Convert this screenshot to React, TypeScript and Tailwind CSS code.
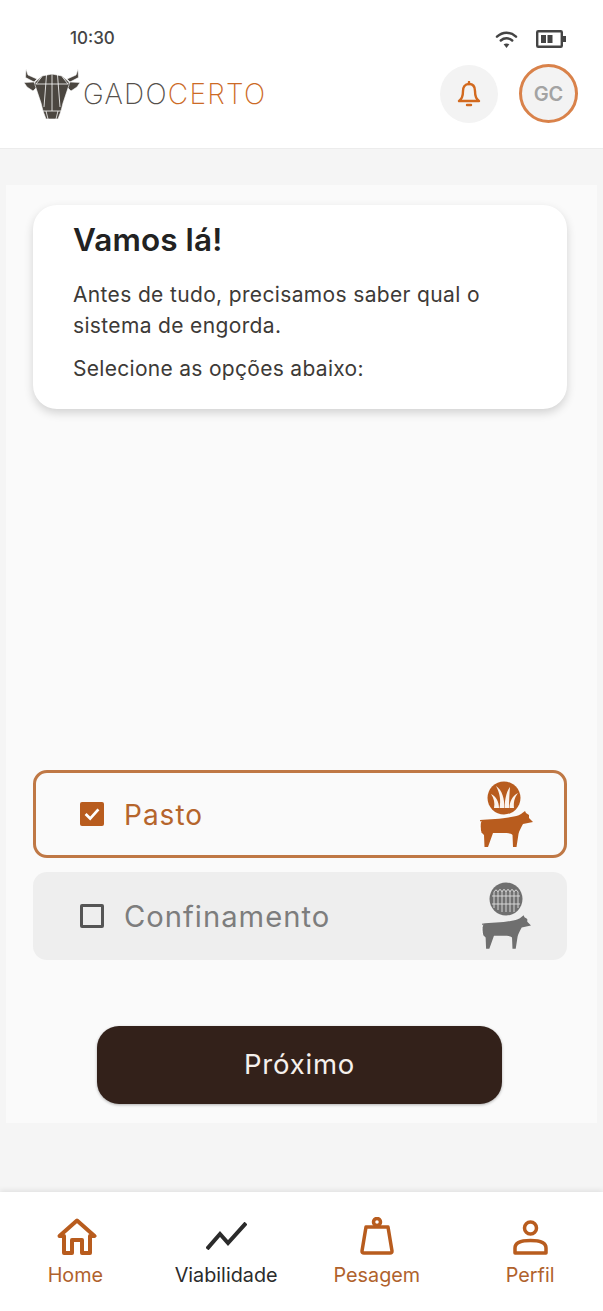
import React from 'react';

const BROWN = '#b85c1e';

const Cow: React.FC<{ color: string; className: string }> = ({ color, className }) => (
  <svg viewBox="0 0 54 37" className={className}>
    <path
      fill={color}
      d="M1 9 C10 8 24 8 32 6 C36 5 39 5 42 3 L46 0 L47 2 L50 4 L50 7 L54 11 L49 12 L44 13 C42 17 40 20 39.500 23 L37.500 36 L34 36 L33.500 24 C32 22 28 22 24 22 L14 22 L9 36 L5.500 36 L5 24 L2 21 Z"
    />
    <path d="M2 10 C0.500 14 0.500 18 2 21" stroke="#ffffff" strokeWidth="1" fill="none" />
  </svg>
);

const GrassBadge: React.FC = () => (
  <svg viewBox="0 0 34 34" className="mr-[4px] h-[34px] w-[34px]">
    <circle cx="17" cy="17" r="16.500" fill={BROWN} />
    <g fill="#fbf3ec">
      <path d="M7 27 C8 22 7 17 4 13 C9 15 12 21 12 27 Z" />
      <path d="M12.500 27 C14 20 13 12 9 5 C15 9 18 18 17 27 Z" />
      <path d="M17.500 27 C18 20 18.500 12 23 6 C22.500 12 22 20 22 27 Z" />
      <path d="M22.500 27 C22.500 21 25 15 31 12 C27 17 26.500 22 27 27 Z" />
    </g>
  </svg>
);

const FenceBadge: React.FC = () => (
  <svg viewBox="0 0 34 34" className="h-[34px] w-[34px]">
    <circle cx="17" cy="17" r="16.500" fill="#6f6f6f" />
    <g stroke="#d6d6d6" strokeWidth="1" fill="none">
      <path d="M5 26 V10 Q7 6 9 10 V28 M9 10 Q11 5 13 10 V30 M13 10 Q15 5 17 10 V30 M17 10 Q19 5 21 10 V30 M21 10 Q23 5 25 10 V30 M25 10 Q27 6 29 10 V26" />
      <path d="M3 14 H31 M3 22 H31" />
    </g>
  </svg>
);

const BullLogo: React.FC = () => (
  <svg viewBox="0 0 56 50" className="h-[50px] w-[56px] shrink-0">
    <g fill="#4b4640" stroke="#ffffff" strokeWidth="0.6" strokeLinejoin="round">
      <path d="M2 0 L4 6 L13 10 L10 13 L1.500 8.500 Z" />
      <path d="M54 0 L52 6 L43 10 L46 13 L54.500 8.500 Z" />
      <path d="M0 13.500 L10 13 L13 18 L9 22 L3 18 Z" />
      <path d="M56 13.500 L46 13 L43 18 L47 22 L53 18 Z" />
      <path d="M11 13 L18 7 L28 5 L38 7 L45 13 L45 16 L39 34 L37 42 L34 50 L22 50 L19 42 L17 34 L11 16 Z" />
    </g>
    <g fill="none" stroke="#ffffff" strokeWidth="0.8">
      <path d="M28 5 V42" />
      <path d="M22.500 6 L20 38 M33.500 6 L36 38" />
      <path d="M12 15 H44" />
      <path d="M18 7.500 L12 15 M38 7.500 L44 15" />
      <path d="M19 42 H37 M22 42 L24 50 M34 42 L32 50" />
    </g>
  </svg>
);

const HomeIcon: React.FC = () => (
  <svg viewBox="0 0 40 37" className="ml-[4px] h-[37px] w-[40px]" fill="none" stroke={BROWN} strokeWidth="4" strokeLinejoin="round" strokeLinecap="round">
    <path d="M2.500 18 L20 2.500 L37.500 18 H33 V35 H25 V22 H15 V35 H7 V18 Z" />
  </svg>
);

const ChartIcon: React.FC = () => (
  <svg viewBox="0 0 41 28" className="mb-[5px] h-[28px] w-[41px]" fill="none" stroke="#2b2b2b" strokeWidth="4" strokeLinecap="butt" strokeLinejoin="miter">
    <path d="M1 27 L14 12 L22 21 L40 1" />
  </svg>
);

const WeightIcon: React.FC = () => (
  <svg viewBox="0 0 34 38" className="h-[38px] w-[34px]" fill="none" stroke={BROWN} strokeWidth="3.500" strokeLinejoin="round">
    <circle cx="17" cy="5" r="3.500" />
    <path d="M6 10 H28 L32 34 Q32 36 30 36 H4 Q2 36 2 34 Z" />
  </svg>
);

const PersonIcon: React.FC = () => (
  <svg viewBox="0 0 35 35" className="h-[35px] w-[35px]" fill="none" stroke={BROWN} strokeWidth="3.500" strokeLinejoin="round">
    <circle cx="17.500" cy="8" r="6" />
    <path d="M2 33 V28 C2 23 8 20.500 17.500 20.500 C27 20.500 33 23 33 28 V33 Z" />
  </svg>
);

const NavItem: React.FC<{ label: string; active?: boolean; children: React.ReactNode; className?: string }> = ({ label, active, children, className }) => (
  <div className={`flex flex-col items-center ${className ?? ''}`}>
    <div className="flex h-[38px] items-end">{children}</div>
    <span className={`mt-[7px] text-[19.800px] leading-[26px] ${active ? 'text-[#2b2b2b]' : 'text-[#b0622c]'}`}>{label}</span>
  </div>
);

export default function App() {
  return (
    <div className="flex h-[1311px] w-[603px] flex-col overflow-hidden bg-[#f5f5f5] font-['Inter',sans-serif]">
      {/* Header */}
      <header className="h-[149px] shrink-0 border-b border-[#ececec] bg-white pl-[24px] pr-[25px] pt-[28px]">
        <div className="flex h-[22px] items-center justify-between pl-[46px] pr-[12px]">
          <span className="text-[17px] font-medium text-[#444444]">10:30</span>
          <div className="flex items-center gap-[18px]">
            <svg viewBox="0 0 24 20" className="h-[19px] w-[23px]" fill="none" stroke="#444444" strokeWidth="2.600" strokeLinecap="round">
              <path d="M2 7 C8 1.500 16 1.500 22 7" />
              <path d="M6 11 C9.500 8 14.500 8 18 11" />
              <path d="M12 19 L9 15 C10.500 14 13.500 14 15 15 Z" fill="#444444" stroke="none" />
            </svg>
            <svg viewBox="0 0 30 18" className="h-[18px] w-[30px]">
              <rect x="1.200" y="1.200" width="24.600" height="15.600" rx="1" fill="none" stroke="#444444" strokeWidth="2.400" />
              <rect x="5" y="5" width="5" height="8" fill="#444444" />
              <rect x="11.500" y="5" width="5" height="8" fill="#444444" />
              <rect x="27" y="6" width="3" height="6" fill="#444444" />
            </svg>
          </div>
        </div>
        <div className="mt-[14px] flex items-center justify-between">
          <div className="flex items-center">
            <BullLogo />
            <span className="ml-[3px] text-[28px] font-extralight tracking-[1.3px] text-[#55504b]">
              GADO<span className="text-[#cc6a26]">CERTO</span>
            </span>
          </div>
          <div className="flex items-center gap-[21px]">
            <div className="flex h-[58px] w-[58px] items-center justify-center rounded-full bg-[#f3f3f3]">
              <svg viewBox="0 0 24 26" className="h-[26px] w-[24px]" fill="none" stroke="#d2691e" strokeWidth="2.400" strokeLinejoin="round" strokeLinecap="round">
                <path d="M12 3 C7.500 3 6 6.500 6 10 C6 15 5 18 2 20 H22 C19 18 18 15 18 10 C18 6.500 16.500 3 12 3 Z" />
                <path d="M12 1 V3 M10 24 H14" />
              </svg>
            </div>
            <div className="flex h-[59px] w-[59px] items-center justify-center rounded-full border-[3px] border-[#d9824a] bg-[#f3f3f3] pt-[1px] text-[20px] font-semibold text-[#a3a3a3]">
              GC
            </div>
          </div>
        </div>
      </header>

      {/* Main panel */}
      <main className="mx-[6px] mt-[36px] flex h-[938px] shrink-0 flex-col bg-[#fafafa] pl-[27px] pr-[30px] pt-[20px]">
        <section className="h-[204px] rounded-[24px] bg-white pl-[40px] pt-[16px] shadow-[0_4px_10px_rgba(0,0,0,0.16)]">
          <h1 className="text-[31.500px] font-semibold leading-[38px] tracking-[0.1px] text-[#222222]">Vamos lá!</h1>
          <p className="mt-[20px] text-[21px] leading-[31px] tracking-[0.35px] text-[#3d3a37]">
            Antes de tudo, precisamos saber qual o<br />sistema de engorda.
          </p>
          <p className="mt-[12px] text-[21px] leading-[31px] tracking-[0.3px] text-[#3d3a37]">Selecione as opções abaixo:</p>
        </section>

        <div className="mt-[361px] flex h-[88px] items-center justify-between rounded-[14px] border-[3px] border-[#bf7845] pl-[44px] pr-[31px]">
          <div className="flex items-center gap-[20px]">
            <div className="flex h-[24px] w-[24px] items-center justify-center rounded-[2px] bg-[#b85c1e]">
              <svg viewBox="0 0 24 24" className="h-[22px] w-[22px]" fill="none" stroke="#ffffff" strokeWidth="3">
                <path d="M5 12 L10 17 L19 7" />
              </svg>
            </div>
            <span className="pt-[2px] text-[28px] tracking-[1px] text-[#b5652c]">Pasto</span>
          </div>
          <div className="flex flex-col items-center">
            <GrassBadge />
            <Cow color={BROWN} className="-mt-[4px] h-[37px] w-[54px]" />
          </div>
        </div>

        <div className="mt-[14px] flex h-[88px] items-center justify-between rounded-[14px] bg-[#eeeeee] pl-[47px] pr-[36px]">
          <div className="flex items-center gap-[20px]">
            <div className="h-[24px] w-[24px] rounded-[2px] border-[3px] border-[#555555]" />
            <span className="pt-[2px] text-[29.200px] tracking-[1px] text-[#7d7d7d]">Confinamento</span>
          </div>
          <div className="flex flex-col items-center">
            <FenceBadge />
            <Cow color="#6f6f6f" className="-mt-[1px] h-[35px] w-[50px]" />
          </div>
        </div>

        <button className="ml-[64px] mt-[66px] flex h-[78px] w-[405px] items-center justify-center rounded-[22px] bg-[#33211a] text-[27.500px] tracking-[0.8px] text-[#f5f0ec] shadow-[0_1px_3px_rgba(0,0,0,0.3)]">
          Próximo
        </button>
      </main>

      <div className="flex-1" />

      {/* Bottom nav */}
      <nav className="grid h-[119px] shrink-0 grid-cols-4 bg-white pt-[25px] shadow-[0_-2px_5px_rgba(0,0,0,0.08)]">
        <NavItem label="Home"><HomeIcon /></NavItem>
        <NavItem label="Viabilidade" active><ChartIcon /></NavItem>
        <NavItem label="Pesagem"><WeightIcon /></NavItem>
        <NavItem label="Perfil" className="pl-[5px]"><PersonIcon /></NavItem>
      </nav>
    </div>
  );
}
